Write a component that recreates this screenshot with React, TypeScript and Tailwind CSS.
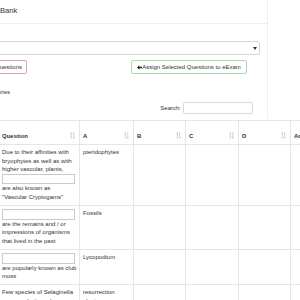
import React from "react";

const SortIcon = () => (
  <svg width="5" height="7" viewBox="0 0 5 7" className="shrink-0 mb-[1px]">
    <path d="M1.25 0 L0 2 H0.8 V7 H1.7 V2 H2.5 Z" fill="#cfcfcf" />
    <path d="M3.75 7 L5 5 H4.2 V0 H3.3 V5 H2.5 Z" fill="#cfcfcf" />
  </svg>
);

const ArrowLeft = () => (
  <svg width="5" height="5" viewBox="0 0 5 5" className="shrink-0">
    <path d="M0 2.5 L2.3 0.2 V1.7 H5 V3.3 H2.3 V4.8 Z" fill="#222" />
  </svg>
);

const Blank = () => (
  <div className="h-[10.5px] w-full border border-[#c9c9c9] bg-white" />
);

type Part = string[] | "input";

const rows: { q: Part[]; a: string[]; h: string }[] = [
  {
    q: [
      ["Due to their affinities with", "bryophytes as well as with", "higher vascular, plants,"],
      "input",
      ["are also known as", "\"Vascular Cryptogams\""],
    ],
    a: ["pteridophytes"],
    h: "h-[61px]",
  },
  {
    q: ["input", ["are the remains and / or", "impressions of organisms", "that lived in the past"]],
    a: ["Fossils"],
    h: "h-[44px]",
  },
  {
    q: ["input", ["are popularly known as club", "moss"]],
    a: ["Lycopodium"],
    h: "h-[35px]",
  },
  {
    q: [["Few species of Selaginella", "are xerophytic and can"]],
    a: ["resurrection", "plants"],
    h: "h-[40px]",
  },
];

const cell = "border-r border-b border-[#e6e6e6] pl-[3px] pr-[4px]";

export default function App() {
  return (
    <div className="w-[300px] h-[300px] overflow-hidden bg-white text-[#333] font-['Liberation_Sans',Arial,sans-serif] text-[6px] leading-[8.5px]">
      {/* Panel */}
      <div className="-ml-[80px] w-[348px] border-r border-[#edf1e7]">
        <div className="h-[24px] border-b border-[#edf1e7] flex items-center pl-[47px] text-[7.7px]">
          Question Bank
        </div>
        <div className="pl-[21px] pr-[7px] pb-[5px]">
          <div className="mt-[17px] h-[14px] border border-[#d6d6d6] rounded-[2px] flex items-center justify-between pl-[5px] pr-[2px]">
            <span>Select Category</span>
            <svg width="4" height="3" viewBox="0 0 4 3">
              <path d="M0 0 H4 L2 3 Z" fill="#333" />
            </svg>
          </div>
          <div className="mt-[5px] flex items-center">
            <button className="w-[86px] h-[14px] border border-[#e6a3a2] rounded-[2px] bg-white flex items-center justify-center whitespace-nowrap">
              Remove Selected Questions
            </button>
            <button className="ml-[104px] w-[116px] h-[14px] border border-[#a9d9a8] rounded-[2px] bg-white flex items-center justify-center whitespace-nowrap">
              <ArrowLeft />
              <span>Assign Selected Questions to eExam</span>
            </button>
          </div>
          <div className="mt-[14px] w-[69px] text-right leading-[8px] whitespace-nowrap">
            Show 10 entries
          </div>
          <div className="mt-[6px] flex items-center justify-end pr-[7px]">
            <span className="mr-[2px]">Search:</span>
            <div className="w-[70px] h-[12px] border border-[#d9d9d9] rounded-[2px]" />
          </div>
        </div>
      </div>

      {/* Table */}
      <div className="mt-[1px] -ml-[31px] w-[382px] grid grid-cols-[30px_81px_54px_52px_53px_52px_60px] border-t border-[#e6e6e6]">
        {["", "Question", "A", "B", "C", "D", "Answer"].map((h, i) => (
          <div
            key={h + i}
            className={`${cell} h-[24px] flex items-end justify-between pb-[4px] font-bold whitespace-nowrap overflow-hidden`}
          >
            <span>{h}</span>
            {i > 0 && i < 6 && <SortIcon />}
          </div>
        ))}
        {rows.map((r, ri) => (
          <React.Fragment key={ri}>
            <div className={`${cell} ${r.h} pt-[3px]`}>
              <div className="w-[6px] h-[6px] border border-[#999] mt-[1px]" />
            </div>
            <div className={`${cell} ${r.h} pt-[3px] overflow-hidden`}>
              {r.q.map((p, pi) =>
                p === "input" ? (
                  <Blank key={pi} />
                ) : (
                  p.map((l, li) => (
                    <div key={`${pi}-${li}`} className="whitespace-nowrap">
                      {l}
                    </div>
                  ))
                )
              )}
            </div>
            <div className={`${cell} ${r.h} pt-[3px] overflow-hidden`}>
              {r.a.map((l, li) => (
                <div key={li} className="whitespace-nowrap">
                  {l}
                </div>
              ))}
            </div>
            <div className={`${cell} ${r.h}`} />
            <div className={`${cell} ${r.h}`} />
            <div className={`${cell} ${r.h}`} />
            <div className={`${cell} ${r.h}`} />
          </React.Fragment>
        ))}
      </div>
    </div>
  );
}
